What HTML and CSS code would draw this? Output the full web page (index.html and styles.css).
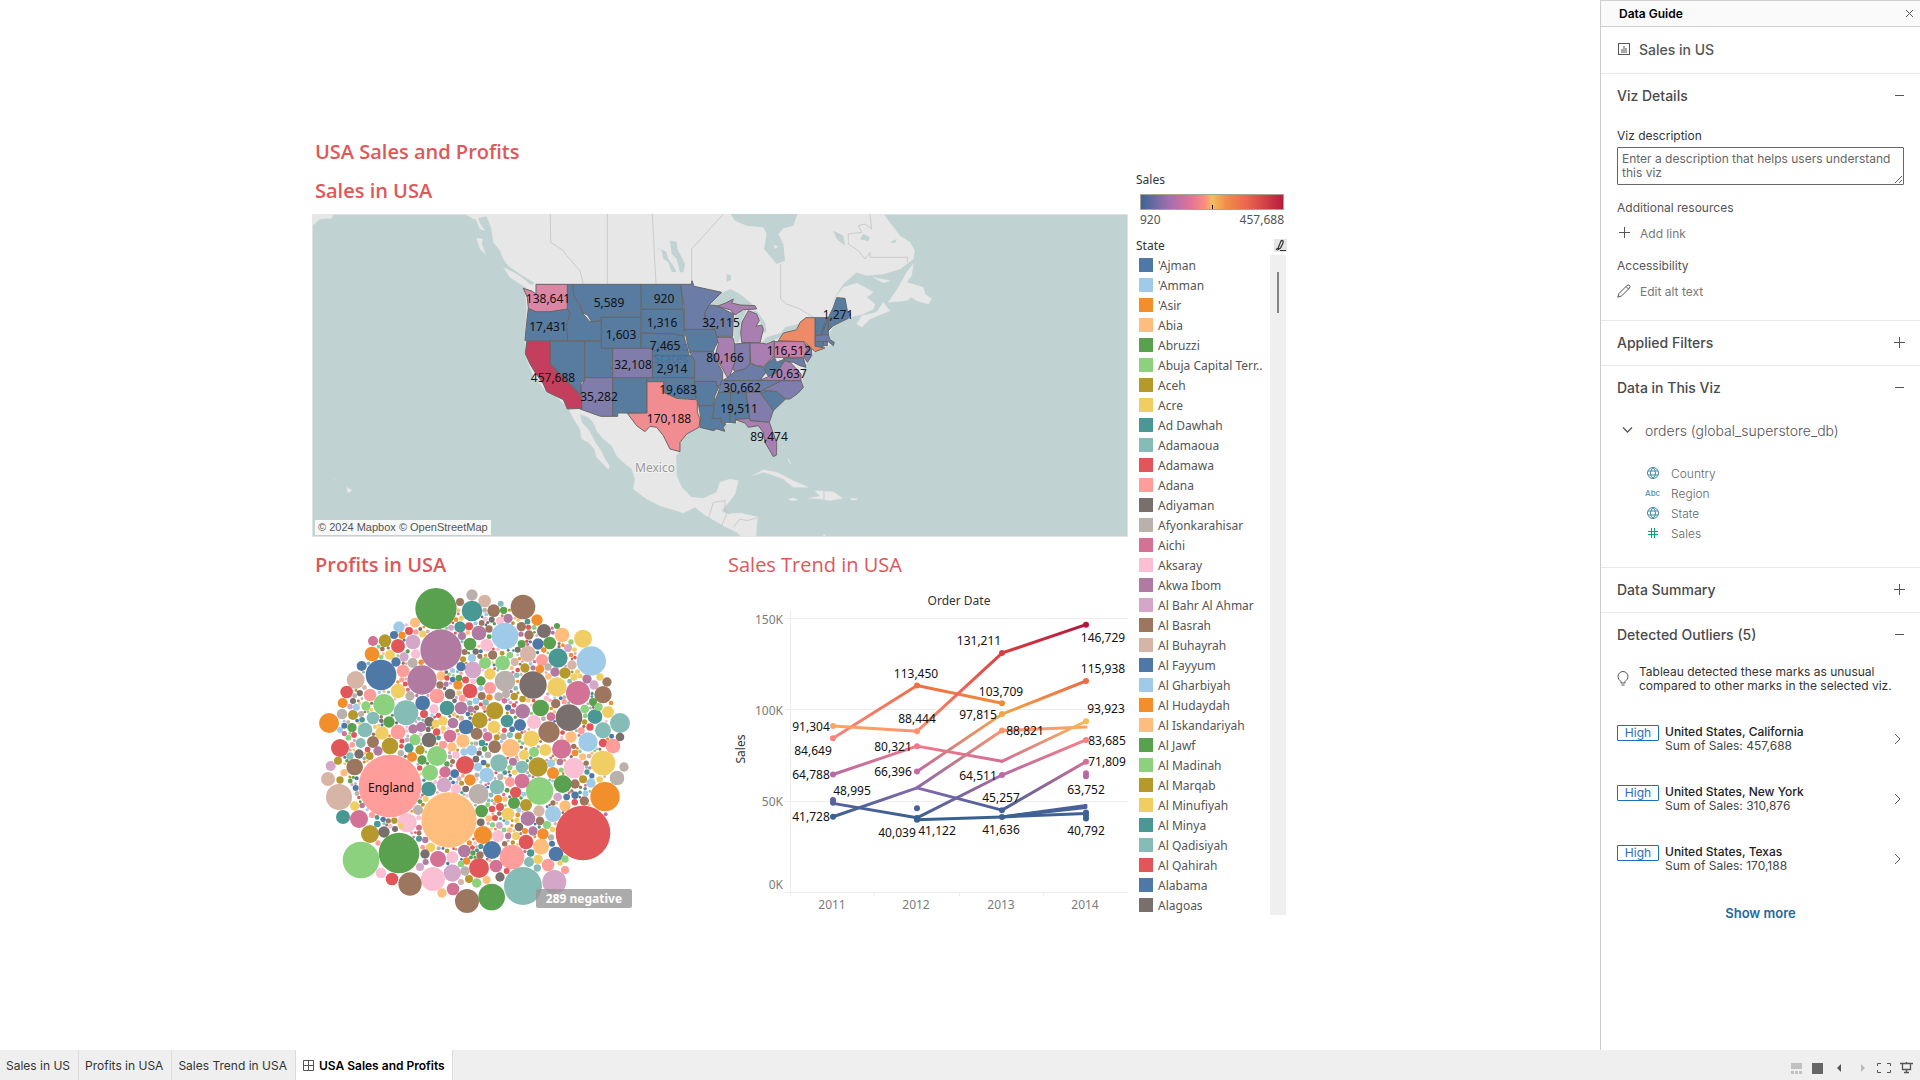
FILE: index.html
```
<!DOCTYPE html>
<html lang="en">
<head>
<meta charset="utf-8">
<title>USA Sales and Profits</title>
<link rel="stylesheet" href="styles.css">
</head>
<body>
<div class="workspace">
  <main class="canvas">
    <div class="dashboard">
      <div class="views">
        <h1 class="title">USA Sales and Profits</h1>
        <section class="view">
          <h2 class="title">Sales in USA</h2>
          <div class="map">
            <svg class="chart" viewBox="-188 5 816 323" role="img" aria-label="Map of sales by state">
              <g transform="scale(.33333)">
                <g class="land">
                  <path d="M-102 15L-80 30L-40 22L-25 60L-20 100L0 125L10 150L25 170L60 195L105 222L75 240L80 300L75 395L76 440L100 500L140 550L165 560L205 598L218 625L240 660L245 690L265 700L283 720L290 745L310 765L325 782L328 770L315 750L300 720L285 700L268 665L245 640L240 615L265 625L280 640L290 665L310 690L335 710L350 740L370 760L395 780L405 810L400 840L440 870L480 890L550 912L585 895L610 915L635 930L670 950L710 970L725 984H768L772 930L778 925L720 912L680 915L665 905L690 875L705 855L715 815L690 810L660 820L650 850L610 868L575 865L545 835L530 800L528 740L540 728L540 700L560 675L600 650L630 655L660 665L680 645L740 635L790 650L795 690L820 740L832 735L830 700L810 650L810 610L860 570L905 530L910 480L940 430L1000 405L985 380L1000 350L1050 325L1090 315L1120 300L1125 285L1100 265L1120 250L1095 235L1070 222L1030 235L990 285L1030 225L1070 190L1100 200L1150 195L1200 180L1240 150L1244 125L1230 100L1200 80L1150 15Z"/>
                  <path d="M-564 15H-500L-505 28L-540 30L-562 50ZM-100 20L-75 25L-60 60L-45 65L-62 40L-70 15ZM-70 88L-52 90L-55 105L-42 137L-60 120ZM10 175L40 190L65 205L100 235L90 242L60 225L30 205Z"/>
                  <path d="M1070 345L1085 320L1130 310L1150 280L1165 300L1170 305L1110 330L1085 355ZM1165 280L1195 235L1220 190L1240 165L1235 200L1220 220L1270 235L1275 255L1295 270L1285 285L1250 275L1235 265L1220 275ZM1120 205L1170 215L1150 222Z"/>
                  <path d="M758 800L790 782L830 790L880 815L925 835L880 835L850 810L810 795L790 790ZM865 870L880 867L894 873L875 875ZM945 845L1000 848L1028 868L990 875L968 870L925 868L960 862ZM1052 868L1072 869L1070 873H1052ZM863 745L873 765L868 762ZM-460 835L-445 843L-452 852L-458 848ZM-495 812L-500 808ZM968 984L972 976L980 984Z"/>
                </g>
                <g class="water">
                  <path d="M692 15L705 35L740 50L790 55L800 75L792 120L830 165L855 155L850 105L835 75L850 58L880 50L892 15ZM510 95L530 98L532 120L555 165L550 190L540 190L530 150L515 135ZM472 115L500 130L505 150L520 170L530 190L515 188L505 160L490 150L485 125ZM680 195L692 198L694 212L680 218ZM632 287L660 255L690 240L720 255L750 280L765 292L720 290L690 280L655 292ZM703 325L720 310L740 300L732 322L722 345L722 380L715 402L703 395ZM740 305L770 306L795 340L800 370L783 372L785 350L775 320ZM780 407L800 385L850 370L840 385L800 402ZM843 372L855 355L895 345L895 358L850 370ZM1000 65L1030 80L1035 110L1010 90ZM1080 90L1090 75L1110 85L1105 97ZM1170 100L1190 90L1185 102ZM820 108L835 112L825 120Z"/>
                </g>
                <path class="border" d="M151 15L152 100L190 125L200 140L240 185L250 225M322 15V225M457 15L468 225M670 15L575 120V215M842 165V270L860 285L900 300L940 325M1110 15L1115 60L1095 45L1075 50L1085 70L1045 75L1045 105L1075 125L1095 150L1110 130V145H1222V160M625 930L640 880L675 875V905L690 915M665 950L680 915M700 955L720 930L740 935L778 925M972 845V870"/>
                <g class="states">
                  <g class="s1">
                    <path d="M85 298L108 308L202 300L210 312L200 345L203 395H75L80 340Z"/>
                    <path d="M151 397H254V516L243 520V560L151 465Z"/>
                    <path d="M202 226H218L222 260L240 290L245 310L270 338L304 335V395H203L200 345L212 315L202 300Z"/>
                    <path d="M218 226H423V325H304V335L275 338L262 318L248 312L240 285L222 262Z"/>
                    <path d="M304 325H423V418H304Z"/>
                    <path d="M254 397H304V418H338V506H254Z"/>
                    <path d="M338 506H440V612H353V622H338Z"/>
                    <path d="M423 226H542L550 301H425Z"/>
                    <path d="M425 301H550L553 382L520 375L425 372Z"/>
                    <path d="M423 372L520 375L552 382L568 440H457V418H423Z"/>
                    <path d="M457 440H575L584 455V506H457Z"/>
                    <path d="M440 506H584L587 572L560 572L530 568L491 550V518H440Z"/>
                    <path d="M553 361H643L658 390L645 415L640 428L568 426Z"/>
                    <path d="M584 517H650L660 525L645 560L640 590H596L590 570Z"/>
                    <path d="M596 590H640L642 600L635 628H665L662 640L678 645L670 655L674 667L650 660L640 665L600 655L602 625Z"/>
                    <path d="M655 550H692L690 640H665L663 628H637L645 575Z"/>
                    <path d="M692 550H738L748 628L705 630L707 642L690 640Z"/>
                    <path d="M780 550L815 545L830 548L857 570L820 605Z"/>
                    <path d="M790 475L815 452L823 445L830 460L855 450L840 478L830 490L805 503Z"/>
                    <path d="M945 326H985L965 378H945ZM985 326V378H962L975 340ZM985 326L1000 295L1010 266L1035 268L1042 305L1052 315L1045 328L1000 350L985 365ZM945 397H970V412L945 414Z"/>
                  </g>
                  <g class="s2">
                    <path d="M542 226H574L576 215L582 232L620 240L665 250L630 285L615 310V340L645 361H553V300Z"/>
                    <path d="M615 310L628 288L650 290L700 315L698 382H650L645 360L615 340Z"/>
                    <path d="M568 428H640L650 455L668 490V515L660 530H650V517H584V455Z"/>
                    <path d="M668 515L690 500L705 487L735 480L752 463L770 470L790 475L798 490L780 514Z"/>
                    <path d="M665 515H845L785 548L655 550Z"/>
                    <path d="M945 380L985 377L990 392L1003 400L1000 410L985 398H945ZM850 447H910L918 475L900 470L880 460L858 458ZM970 397H982V410H970Z"/>
                  </g>
                  <g class="s3">
                    <path d="M254 506H338V622H302L240 600L246 570L243 530L254 516Z"/>
                    <path d="M338 418H457V506H338Z"/>
                    <path d="M704 405L750 402V465L735 480L705 487L697 480L704 460Z"/>
                    <path d="M738 550H780L820 605L808 640L750 635L748 610Z"/>
                    <path d="M785 545L845 515H903L910 535L895 552L870 570L857 570L830 548L810 545Z"/>
                    <path d="M915 405L935 420V440L922 460L912 445Z"/>
                  </g>
                  <g class="s4">
                    <path d="M650 385H698L704 405V460L690 500L682 505L668 480L645 440L655 405Z"/>
                    <path d="M650 292L675 283L700 270L695 282L720 288L765 290L770 300L730 302L705 318L690 302ZM725 400L722 370L726 340L745 305L770 315L778 335L768 352L785 348L790 360L780 402Z"/>
                    <path d="M750 402H780L800 405L823 395V440L790 472L770 470L752 462Z"/>
                    <path d="M705 632L748 628L750 635L808 640L815 660L830 700V738L820 743L808 722L795 700L790 670L775 650L745 655L735 642Z"/>
                    <path d="M780 514L805 503L830 490L855 455L870 460L885 475L903 495V515Z"/>
                  </g>
                  <path class="ca" d="M80 397H151V465L243 560L246 598L202 600L190 572L165 560L140 548L130 525L105 490L90 465L76 435Z"/>
                  <path class="tx" d="M441 518H491V550L530 568L587 572L592 575V610L600 630L597 655L560 675L540 700V728L510 720L490 680L470 655L450 652L435 668L410 650L382 613L441 612Z"/>
                  <path class="ny" d="M835 395L850 372L890 362L900 340L918 326H945V412L975 417L945 428L932 415L912 398Z"/>
                  <path class="wa" d="M70 238L95 246L108 255V226H202V300L150 308H108L85 298L82 265Z"/>
                  <path class="pa" d="M823 398H910L922 420L910 445H823Z"/>
                </g>
              </g>
              <g class="country"><text x="170" y="137">United</text><text x="171" y="149">States</text></g>
              <text class="place" x="155" y="258">Mexico</text>
              <g class="marks">
                <text x="48" y="89">138,641</text><text x="48" y="117">17,431</text><text x="109" y="93">5,589</text><text x="164" y="89">920</text>
                <text x="162" y="113">1,316</text><text x="121" y="125">1,603</text><text x="165" y="136">7,465</text><text x="172" y="159">2,914</text>
                <text x="133" y="155">32,108</text><text x="53" y="168">457,688</text><text x="99" y="187">35,282</text><text x="178" y="180">19,683</text>
                <text x="169" y="209">170,188</text><text x="221" y="113">32,115</text><text x="225" y="148">80,166</text><text x="242" y="178">30,662</text>
                <text x="239" y="199">19,511</text><text x="269" y="227">89,474</text><text x="338" y="105">1,271</text><text x="289" y="141">116,512</text><text x="288" y="164">70,637</text>
              </g>
            </svg>
            <div class="credit">© 2024 Mapbox © OpenStreetMap</div>
          </div>
        </section>
        <div class="pair">
          <section class="view">
            <h2 class="title">Profits in USA</h2>
            <div class="bubbles">
              <svg class="chart" viewBox="2 36 408 330" role="img" aria-label="Profits by state">
                <g id="bubbles" transform="scale(.33333)"></g>
                <text class="mark" x="81" y="237">England</text>
              </svg>
              <span class="negative">289 negative</span>
            </div>
          </section>
          <section class="view">
            <h2 class="title light">Sales Trend in USA</h2>
            <svg class="chart" viewBox="0 36 408 330" role="img" aria-label="Sales by order date">
              <path class="grid" d="M65 68.5H408M65 159.500H408M65 251.500H408M65 342.500H408M70.500 60V346M154.500 343V346M239.500 343V346M323.500 343V346"/>
              <g id="trend"></g>
              <text class="head" x="239" y="50">Order Date</text>
              <text class="head" transform="translate(20 199) rotate(-90)">Sales</text>
              <g class="ticks end"><text x="63" y="69">150K</text><text x="63" y="160">100K</text><text x="63" y="251">50K</text><text x="63" y="334">0K</text></g>
              <g class="ticks"><text x="112" y="354">2011</text><text x="196" y="354">2012</text><text x="281" y="354">2013</text><text x="365" y="354">2014</text></g>
              <g class="marks">
                <text x="91" y="176">91,304</text><text x="93" y="200">84,649</text><text x="91" y="224">64,788</text><text x="132" y="240">48,995</text><text x="91" y="266">41,728</text>
                <text x="196" y="123">113,450</text><text x="197" y="168">88,444</text><text x="173" y="196">80,321</text><text x="173" y="221">66,396</text><text x="177" y="282">40,039</text><text x="217" y="280">41,122</text>
                <text x="259" y="90">131,211</text><text x="281" y="141">103,709</text><text x="258" y="164">97,815</text><text x="305" y="180">88,821</text><text x="258" y="225">64,511</text><text x="281" y="247">45,257</text><text x="281" y="279">41,636</text>
                <text x="383" y="87">146,729</text><text x="383" y="118">115,938</text><text x="386" y="158">93,923</text><text x="387" y="190">83,685</text><text x="387" y="211">71,809</text><text x="366" y="239">63,752</text><text x="366" y="280">40,792</text>
              </g>
            </svg>
          </section>
        </div>
      </div>
      <aside class="legends">
        <section class="ramp">
          <h3 class="legend-title">Sales</h3>
          <div class="ramp-bar"></div>
          <div class="ramp-ends"><span>920</span><span>457,688</span></div>
        </section>
        <section class="state-legend">
          <div class="legend-head">
            <h3 class="legend-title">State</h3>
            <button class="highlight" aria-label="Highlight"><svg width="12" height="13" viewBox="0 0 12 13"><path d="M4.500 8L7 2Q8 1 9 2Q9.500 3 9 4L6.500 9L4 10.500ZM3.500 9L2 11M6 11.500H12" fill="none" stroke="#333" stroke-width="1.200"/></svg></button>
          </div>
          <div class="state-scroll"><ul class="state-list" id="states"></ul><div class="track"><div class="thumb"></div></div></div>
        </section>
      </aside>
    </div>
  </main>
  <aside class="guide">
    <header class="guide-head"><h2>Data Guide</h2><button aria-label="Close"><svg width="9" height="9" viewBox="0 0 9 9"><path d="M1 1L8 8M8 1L1 8"/></svg></button></header>
    <div class="guide-sheet"><svg width="12" height="12" viewBox="0 0 12 12"><rect x=".5" y=".5" width="11" height="11" fill="none" stroke="#555"/><path d="M3 10V6H5V3H7V5H9V10Z" fill="#aaa"/></svg><span>Sales in US</span></div>
    <section class="panel details">
      <div class="panel-head"><h3>Viz Details</h3><button aria-label="Collapse"><svg width="11" height="11" viewBox="0 0 11 11"><path d="M1 5.500H10"/></svg></button></div>
      <label for="desc" class="dark">Viz description</label>
      <textarea id="desc" placeholder="Enter a description that helps users understand this viz"></textarea>
      <h4>Additional resources</h4>
      <button class="action"><svg width="14" height="14" viewBox="0 0 14 14"><path d="M7.500 1V12M2 6.500H13"/></svg>Add link</button>
      <h4>Accessibility</h4>
      <button class="action"><svg width="14" height="14" viewBox="0 0 14 14"><path d="M.8 13.200L2 9.500L10 1.500Q11.300 .5 12.500 1.500Q13.500 2.600 12.500 4L4.500 12ZM9 2.500L11.500 5"/></svg>Edit alt text</button>
    </section>
    <section class="panel"><div class="panel-head"><h3>Applied Filters</h3><button aria-label="Expand"><svg width="11" height="11" viewBox="0 0 11 11"><path d="M5.500 0V11M0 5.500H11"/></svg></button></div></section>
    <section class="panel data">
      <div class="panel-head"><h3>Data in This Viz</h3><button aria-label="Collapse"><svg width="11" height="11" viewBox="0 0 11 11"><path d="M1 5.500H10"/></svg></button></div>
      <button class="source"><svg width="11" height="8" viewBox="0 0 11 8"><path d="M1 1.500L5.500 6L10 1.500" fill="none" stroke="#444" stroke-width="1.300"/></svg>orders (global_superstore_db)</button>
      <ul class="fields">
        <li><svg class="globe" width="16" height="12" viewBox="0 0 16 12"><path d="M8 .5A5.500 5.500 0 1 0 8 11.500A5.500 5.500 0 1 0 8 .5M8 .5Q3 6 8 11.500Q13 6 8 .5M3 4H13M3 8H13"/></svg>Country</li>
        <li><span class="abc">Abc</span>Region</li>
        <li><svg class="globe" width="16" height="12" viewBox="0 0 16 12"><path d="M8 .5A5.500 5.500 0 1 0 8 11.500A5.500 5.500 0 1 0 8 .5M8 .5Q3 6 8 11.500Q13 6 8 .5M3 4H13M3 8H13"/></svg>State</li>
        <li><svg class="hash" width="16" height="12" viewBox="0 0 16 12"><path d="M6.500 1V11M9.500 1V11M3 4.500H13M3 7.500H13"/></svg>Sales</li>
      </ul>
    </section>
    <section class="panel"><div class="panel-head"><h3>Data Summary</h3><button aria-label="Expand"><svg width="11" height="11" viewBox="0 0 11 11"><path d="M5.500 0V11M0 5.500H11"/></svg></button></div></section>
    <section class="panel outliers">
      <div class="panel-head"><h3>Detected Outliers (5)</h3><button aria-label="Collapse"><svg width="11" height="11" viewBox="0 0 11 11"><path d="M1 5.500H10"/></svg></button></div>
      <p class="tip"><svg width="12" height="16" viewBox="0 0 12 16"><path d="M4 12V10.500Q1 8.500 1 5.500A5 5 0 0 1 11 5.500Q11 8.500 8 10.500V12ZM4.500 14H7.500" fill="none" stroke="#555"/></svg><span>Tableau detected these marks as unusual compared to other marks in the selected viz.</span></p>
      <button class="outlier"><span class="high">High</span><span class="who"><b>United States, California</b><br>Sum of Sales: 457,688</span><svg width="7" height="12" viewBox="0 0 7 12"><path d="M1 1L6 6L1 11"/></svg></button>
      <button class="outlier"><span class="high">High</span><span class="who"><b>United States, New York</b><br>Sum of Sales: 310,876</span><svg width="7" height="12" viewBox="0 0 7 12"><path d="M1 1L6 6L1 11"/></svg></button>
      <button class="outlier"><span class="high">High</span><span class="who"><b>United States, Texas</b><br>Sum of Sales: 170,188</span><svg width="7" height="12" viewBox="0 0 7 12"><path d="M1 1L6 6L1 11"/></svg></button>
      <button class="more">Show more</button>
    </section>
  </aside>
</div>
<footer class="tabs">
  <nav>
    <a href="#sales">Sales in US</a><a href="#profits">Profits in USA</a><a href="#trend">Sales Trend in USA</a>
    <a href="#dashboard" class="active"><svg width="11" height="11" viewBox="0 0 11 11"><path d="M.5 .5H10.500V10.500H.5ZM5.500 .5V10.500M.5 5.500H10.500" fill="none" stroke="#555"/></svg>USA Sales and Profits</a>
  </nav>
  <div class="tools">
    <button aria-label="Filmstrip"><svg width="12" height="12" viewBox="0 0 12 12"><path d="M1 1H12V7H1ZM1 9H4V12H1ZM5 9H8V12H5ZM9 9H12V12H9Z" fill="#c1c1c1"/></svg></button>
    <button aria-label="Tabs"><svg width="12" height="12" viewBox="0 0 12 12"><path d="M0 1H11V12H0Z" fill="#666"/></svg></button>
    <button aria-label="Previous"><svg width="12" height="12" viewBox="0 0 12 12"><path d="M7 2V10L3 6Z" fill="#555"/></svg></button>
    <button aria-label="Next"><svg width="12" height="12" viewBox="0 0 12 12"><path d="M5 2V10L9 6Z" fill="#bbb"/></svg></button>
    <button aria-label="Full screen"><svg width="14" height="12" viewBox="0 0 14 12"><path d="M.5 4V1.500H4M10 1.500H13.500V4M13.500 8V10.500H10M4 10.500H.5V8" fill="none" stroke="#555"/></svg></button>
    <button aria-label="Present"><svg width="13" height="12" viewBox="0 0 13 12"><path d="M0 1.500H13M2.500 2V7.500H10.500V2M6.500 7.500V11M4 10.500H9M6.500 0V2" fill="none" stroke="#555" stroke-width="1.300"/></svg></button>
  </div>
</footer>
<script src="script.js"></script>
</body>
</html>
```
FILE: styles.css
```
* { box-sizing: border-box; }
body { margin: 0; min-height: 100vh; display: flex; flex-direction: column; font-family: "Inter", sans-serif; font-size: 12px; color: #333; background: #fff; }
h1, h2, h3, h4, p, ul { margin: 0; padding: 0; list-style: none; }
button { border: 0; padding: 0; background: none; font: inherit; color: inherit; display: flex; align-items: center; }
svg { flex: none; }
.workspace { flex: 1; display: flex; }
.canvas { flex: 1; display: flex; align-items: center; justify-content: center; font-family: "Noto Sans", sans-serif; }
.dashboard { width: 976px; max-width: 100%; display: flex; gap: 8px; padding-top: 2px; }
.views { flex: 1; min-width: 0; display: flex; flex-direction: column; gap: 7px; }
.title { color: #e15759; font-family: "Open Sans", sans-serif; font-size: 20px; line-height: 32px; font-weight: 600; padding-left: 3px; }
.title.light { font-weight: 400; padding-left: 8px; }
.chart { display: block; width: 100%; height: auto; }
.view { min-width: 0; }
.map { margin-top: 7px; position: relative; background: #c0d2d2; box-shadow: inset 0 0 0 1px #e0e3e3; }
.credit { position: absolute; left: 3px; bottom: 2px; height: 15px; padding: 0 3px; background: #f7f9f9; font: 11px/15px "Liberation Sans", sans-serif; color: #555; }
.pair { display: grid; grid-template-columns: 1fr 1fr; padding-top: 5px; }
.pair .title { margin-bottom: 5px; }
.land { fill: #e7e7e7; stroke: #e7e7e7; }
.water { fill: #c0d2d2; }
.border { fill: none; stroke: #bdbdbd; stroke-width: 2; }
.states { stroke: #666; stroke-width: 3; stroke-linejoin: round; }
.s1 { fill: #587ba0; }
.s2 { fill: #6b7ca7; }
.s3 { fill: #807cab; }
.s4 { fill: #a97fb1; }
.ca { fill: #c43f5e; }
.tx { fill: #f18c91; }
.ny { fill: #ee8a66; }
.wa { fill: #db86a5; }
.pa { fill: #cd7fac; }
.chart text { font-size: 12px; text-anchor: middle; dominant-baseline: central; fill: #666; }
.chart .marks text, .chart .mark { fill: #111; }
.chart .country text { fill: #43678f; fill-opacity: .6; }
.chart .place { fill: #999; stroke: #f2f2f2; stroke-width: 2px; paint-order: stroke; }
.chart .head { fill: #333; }
.chart .ticks text { fill: #7b7b7b; }
.chart .end text { text-anchor: end; }
.grid { stroke: #ededed; fill: none; }
.bubbles { position: relative; }
.negative { position: absolute; left: 224px; top: 303px; width: 96px; background: rgba(150, 150, 150, .8); border-radius: 2px; color: #fff; font-weight: 700; font-size: 12px; line-height: 19px; text-align: center; }
.legends { width: 152px; padding-top: 34px; }
.legend-title { font-size: 12px; font-weight: 400; line-height: 20px; color: #333; }
.ramp-bar { margin: 4px 4px 0; height: 16px; border: 1px solid #a9a393; background: linear-gradient(#111, #111) 50% 100% / 1px 4px no-repeat, linear-gradient(90deg, #3b6596, #a56fb0 20%, #e07396 35%, #ff8d7f 45%, #f6bd5e 50%, #f08e47 60%, #ea644e 75%, #b71d3e); }
.ramp-ends { display: flex; justify-content: space-between; padding: 0 4px; line-height: 20px; color: #555; }
.legend-head { display: flex; justify-content: space-between; align-items: center; padding: 6px 1px 0 0; height: 25px; }
.highlight { width: 13px; height: 13px; background: #e6e6e6; }
.state-scroll { display: flex; }
.state-list { flex: 1; min-width: 0; }
.state-list li { display: flex; align-items: center; gap: 5px; padding-left: 3px; height: 20px; color: #555; white-space: nowrap; }
.swatch { width: 14px; height: 14px; flex: none; }
.track { width: 16px; background: #efefef; margin-right: 2px; padding: 17px 7px; }
.thumb { width: 2px; height: 41px; background: #858585; }
.guide { width: 320px; border-left: 1px solid #ccc; }
.guide-head { display: flex; align-items: center; justify-content: space-between; height: 27px; padding: 0 6px 0 18px; background: #fafafa; border: 1px solid #d0d0d0; border-width: 1px 0; color: #000; }
.guide-head h2 { font-size: 12px; font-weight: 600; }
.guide button svg path { fill: none; stroke: #555; }
.guide-sheet { display: flex; align-items: center; gap: 9px; height: 46px; padding: 0 0 2px 17px; font-size: 14px; font-weight: 500; color: #555; }
.panel { border-top: 1px solid #e8e8e8; padding: 0 16px; }
.panel-head { display: flex; justify-content: space-between; align-items: center; height: 44px; padding-bottom: 2px; }
.panel-head button { margin-right: -1px; }
.panel-head h3 { font-size: 14px; font-weight: 500; color: #4a4a4a; }
.details { padding-bottom: 20px; display: flex; flex-direction: column; }
.details label { margin-top: 10px; line-height: 16px; }
.details h4 { font-weight: 400; font-size: 12px; line-height: 16px; color: #555; margin-top: 15px; }
.details textarea { margin-top: 3px; height: 38px; padding: 4px; border: 1px solid #666; border-radius: 1px; font: 12px/14px "Inter", sans-serif; overflow: hidden; }
.details textarea::placeholder { color: #666; }
.action { gap: 9px; margin-top: 8px; height: 18px; color: #777; }
.action + h4 { margin-top: 16px; }
.data { padding-bottom: 24px; }
.source { margin-top: 9px; padding-left: 5px; gap: 12px; height: 22px; font-size: 14px; font-weight: 300; color: #555; }
.fields { padding: 22px 0 0 28px; }
.fields li { display: flex; align-items: center; gap: 10px; height: 20px; color: #666; font-weight: 300; }
.fields path { fill: none; stroke: #3f89a5; }
.fields .hash path { stroke: #00a578; }
.abc { width: 16px; font-size: 8px; font-weight: 500; color: #4996b2; }
.tip { display: flex; align-items: center; gap: 10px; margin: 8px 0 16px; color: #333; line-height: 14px; }
.outlier { width: 100%; height: 60px; padding: 16px 3px 0 0; align-items: flex-start; text-align: left; line-height: 14px; gap: 6px; color: #444; }
.outlier b { font-weight: 500; color: #222; }
.outlier svg { margin-top: 8px; }
.high { width: 42px; height: 16px; border: 1px solid #1d6fc4; color: #2a6ebb; text-align: center; border-radius: 1px; }
.who { flex: 1; }
.more { margin: 16px auto 0; font-size: 13px; font-weight: 600; color: #1f69a0; }
.tabs { height: 30px; background: #efefef; display: flex; justify-content: space-between; }
.tabs nav { display: flex; }
.tabs a { display: flex; align-items: center; gap: 5px; padding: 0 8px 0 6px; border-right: 1px solid #dcdcdc; color: #333; text-decoration: none; }
.tabs .active { background: #fff; color: #000; font-weight: 600; padding: 0 7px; }
.tools { display: flex; gap: 8px; padding: 5px 7px 0 0; align-items: center; }
.tools button { width: 14px; justify-content: center; }
```
FILE: script.js
```
const NS = 'http://www.w3.org/2000/svg';
const palette = ['#4e79a7', '#a0cbe8', '#f28e2b', '#ffbe7d', '#59a14f', '#8cd17d', '#b6992d', '#f1ce63', '#499894', '#86bcb6', '#e15759', '#ff9d9a', '#79706e', '#bab0ac', '#d37295', '#fabfd2', '#b07aa1', '#d4a6c8', '#9d7660', '#d7b5a6'];

function add(parent, name, attrs) {
  const el = document.createElementNS(NS, name);
  for (const key in attrs) el.setAttribute(key, attrs[key]);
  parent.appendChild(el);
  return el;
}

/* State legend */
const states = "'Ajman,'Amman,'Asir,Abia,Abruzzi,Abuja Capital Terr..,Aceh,Acre,Ad Dawhah,Adamaoua,Adamawa,Adana,Adiyaman,Afyonkarahisar,Aichi,Aksaray,Akwa Ibom,Al Bahr Al Ahmar,Al Basrah,Al Buhayrah,Al Fayyum,Al Gharbiyah,Al Hudaydah,Al Iskandariyah,Al Jawf,Al Madinah,Al Marqab,Al Minufiyah,Al Minya,Al Qadisiyah,Al Qahirah,Alabama,Alagoas".split(',');
const stateColors = [...Array(31).keys()].map(i => i % 20).concat([0, 12]);
states.forEach((name, i) => {
  const li = document.createElement('li');
  const swatch = document.createElement('span');
  swatch.className = 'swatch';
  swatch.style.background = palette[stateColors[i]];
  li.append(swatch, name);
  document.getElementById('states').append(li);
});

/* Packed bubbles: x, y, radius, palette letter (a = first colour) */
const packed = `378,176,62,e 486,135,17,n 450,156,12,s 524,153,19,t 486,183,31,i 551,182,19,s 572,161,9,j 581,181,11,e 639,171,37,s 594,205,14,q 681,210,17,c 570,212,12,p
393,300,62,q 450,231,17,i 477,229,12,k 507,249,22,q 537,237,11,s 585,258,40,b 438,209,7,c 456,258,12,q 267,231,17,b 315,218,15,d 297,243,12,k 318,246,8,l 331,237,6,m
189,273,15,o 225,272,19,g 252,255,12,a 276,256,11,c 264,288,21,k 309,276,22,r 317,312,14,p 186,312,22,c 155,348,15,a 213,375,46,a 240,315,15,h 258,336,14,a 282,321,14,r 308,339,15,n
279,363,19,l 336,390,44,q 137,390,27,t 110,426,19,k 98,459,15,c 129,453,9,m 180,435,19,l 222,464,32,f 264,423,22,h 300,438,14,n 288,488,37,j 338,459,22,a 381,438,22,l 342,492,12,k
372,477,14,p 393,378,14,d 390,405,11,s 420,432,16,m 444,405,14,c 480,423,22,k 489,360,25,r 453,350,14,a 513,393,14,e 515,438,12,s 486,324,12,b 480,282,19,e 530,285,19,p 525,339,18,f
548,315,14,s 578,339,22,f 540,372,17,h 540,414,18,l 585,393,31,n 411,474,22,i 453,474,19,q 399,513,14,h 429,519,16,q 358,515,15,m 468,531,22,a 509,511,24,g 554,482,26,g 552,531,19,h
591,513,19,i 630,525,18,a 638,484,22,q 669,405,41,m 692,474,25,e 741,411,29,h 804,429,36,o 879,434,26,s 891,396,14,s 852,405,14,r 870,381,11,h 831,387,14,q 844,333,44,b 819,266,27,h
756,255,22,d 741,228,9,e 702,243,21,m 719,279,19,e 684,282,17,a 657,255,14,s 634,230,14,s 635,282,12,e 654,312,24,t 744,324,29,i 696,330,18,l 690,357,13,c 714,351,11,n 735,366,14,q
765,369,17,g 786,345,14,t 774,294,12,r 783,315,7,c 783,276,8,f 645,354,14,g 614,336,12,t 623,299,9,m 792,381,11,h 777,503,40,m 737,461,14,s 717,546,32,s 723,500,13,o 672,516,21,p
664,566,24,h 855,500,22,i 894,486,18,h 903,459,7,c 930,519,30,j 879,541,24,j 840,531,11,k 824,477,13,f 849,456,12,e 866,471,12,f 824,516,8,g 834,576,29,b 783,561,17,d 755,597,29,o
706,600,18,h 672,606,15,f 795,609,10,c 792,654,31,p 879,639,37,h 879,579,13,k 909,588,22,l 930,561,13,m 942,651,14,n 921,684,22,n 885,740,44,c 823,753,14,s 843,699,14,b 831,666,8,i
795,702,14,s 758,702,27,e 729,669,18,c 689,723,41,f 684,651,29,g 636,651,19,j 636,693,22,o 609,635,12,q 567,639,26,j 602,594,27,d 642,615,15,h 554,590,19,s 533,560,14,o 500,551,18,s
459,573,20,d 420,558,19,o 380,546,11,k 377,521,12,h 357,570,22,m 315,569,17,f 330,600,14,g 306,621,15,c 336,630,14,e 381,618,30,f 297,594,14,i 240,588,25,g 264,546,22,l 237,516,17,e
216,549,20,h 189,576,18,s 189,504,19,j 165,540,22,j 152,579,15,j 129,495,15,g 126,533,14,e 96,492,16,n 57,519,30,c 90,540,9,b 90,594,27,k 147,612,14,m 120,618,11,j 179,618,12,g
204,603,14,q 84,632,12,g 62,648,15,r 102,668,11,d 134,651,25,s 54,687,21,t 90,690,11,g 87,741,39,t 134,768,14,h 99,801,21,i 147,807,27,o 240,708,94,l 137,714,9,a 168,468,14,f
153,492,9,n 309,537,14,q 333,531,15,q 329,654,8,k 360,668,24,f 405,666,17,o 465,645,27,k 411,642,8,e 434,671,13,a 402,705,22,r 356,717,22,i 438,717,15,p 347,747,9,h 467,717,10,m
480,690,17,c 506,732,30,n 530,675,22,b 504,651,13,b 561,711,22,j 600,696,15,l 617,727,17,k 564,747,12,c 417,810,83,d 515,783,19,e 324,780,15,n 291,818,29,p 519,855,27,c 546,777,10,k
570,771,12,k 612,759,18,e 648,765,18,g 594,792,19,h 555,804,9,k 627,831,13,m 654,806,22,q 687,783,17,t 690,813,13,s 729,792,24,b 711,825,12,f 765,768,17,d 743,741,13,r 770,741,10,a
729,759,8,s 699,852,17,c 669,843,14,q 648,876,22,k 618,858,12,h 645,843,9,c 564,858,18,p 693,890,24,d 738,912,22,a 726,881,9,a 819,849,82,k 887,793,6,q 606,921,37,l 546,900,27,a
507,954,30,k 558,948,19,o 570,981,14,m 590,963,9,k 463,903,19,q 427,922,18,p 453,942,10,f 465,963,14,n 470,933,11,c 510,915,11,s 489,909,8,e 384,927,24,o 362,892,14,h 345,912,14,m
347,936,9,q 330,951,12,r 427,969,26,r 369,987,36,p 396,1029,14,d 429,1017,19,o 453,996,9,t 477,987,12,g 500,999,14,f 530,990,12,d 471,1053,36,s 545,1041,40,e 639,1008,57,j 657,936,15,j
662,909,11,i 684,928,14,h 714,945,19,l 682,954,11,j 733,996,36,r 765,960,12,l 765,927,11,f 750,939,8,h 267,909,61,e 153,930,55,f 180,852,27,g 222,846,17,m 204,879,8,l 213,969,16,p
246,987,19,k 300,1002,35,s 202,822,10,i 186,795,9,l 255,837,9,m 273,828,8,h 327,833,9,o 327,866,9,i 426,591,14,d 438,615,11,p 462,606,11,b 485,601,16,b 516,579,10,i 534,615,10,n
580,560,10,n 600,555,9,j 399,584,12,l 723,640,12,b 750,636,10,q 411,384,8,k 447,384,10,e 588,432,12,n 566,440,13,n 498,453,10,b 623,360,7,k`;
const circles = packed.split(/\s+/).map(entry => {
  const [x, y, r, c] = entry.split(',');
  return [+x, +y, +r, c.charCodeAt(0) - 97];
});

/* The smallest states fill the gaps between the larger ones */
let seed = 7;
const random = () => (seed = (seed * 16807) % 2147483647) / 2147483647;
for (let i = 0; i < 60000; i++) {
  const x = 60 + random() * 880;
  const y = 120 + random() * 870;
  if (Math.hypot(x - 500, (y - 560) * 1.03) > 405) continue;
  const limit = i < 20000 ? 7 : 4;
  let r = limit + random() * 5;
  for (const c of circles) {
    r = Math.min(r, Math.hypot(x - c[0], y - c[1]) - c[2]);
    if (r < limit) break;
  }
  if (r >= limit) circles.push([x, y, r, Math.floor(random() * 20)]);
}
for (const [x, y, r, c] of circles) {
  add(document.getElementById('bubbles'), 'circle', { cx: x.toFixed(1), cy: y.toFixed(1), r: r.toFixed(1), fill: palette[c] });
}

/* Sales trend: each line is coloured by its value */
const ramp = [[40, 54, 97, 143], [48, 78, 96, 155], [58, 140, 103, 172], [66, 193, 107, 161], [75, 222, 112, 145], [84, 248, 128, 130], [89, 255, 149, 106], [94, 246, 187, 88], [98, 243, 163, 70], [104, 241, 137, 61], [114, 236, 112, 70], [131, 216, 64, 67], [147, 183, 18, 58]];
function color(v) {
  let i = 1;
  while (i < ramp.length - 1 && ramp[i][0] < v) i++;
  const [a, b] = [ramp[i - 1], ramp[i]];
  const t = Math.max(0, Math.min(1, (v - a[0]) / (b[0] - a[0])));
  return `rgb(${[1, 2, 3].map(k => Math.round(a[k] + (b[k] - a[k]) * t))})`;
}
const years = [113, 197, 282, 366];
const yOf = v => 343 - v * 1.829;
const trend = document.getElementById('trend');
const series = [[0, 41.7, 57.5, 88.8, 90.7], [0, 64.8, 80.3, 72, 93.9], [1, 66.4, 97.8, 115.9], [0, 84.6, 113.5, 103.7], [0, 91.3, 88.4, 131.2, 146.7], [0, 49, 41.1, 64.5, 83.7], [1, 57.5, 45.3, 71.8], [2, 41.6, 47.8], [2, 41.6, 46.8], [1, 40, 41.6, 43.5]];
series.forEach(([start, ...values], s) => {
  for (let i = 1; i < values.length; i++) {
    const [x1, x2] = [years[start + i - 1], years[start + i]];
    const [y1, y2] = [yOf(values[i - 1]), yOf(values[i])];
    const id = `seg${s}-${i}`;
    const gradient = add(trend, 'linearGradient', { id, gradientUnits: 'userSpaceOnUse', x1, y1, x2, y2 });
    add(gradient, 'stop', { offset: 0, 'stop-color': color(values[i - 1]) });
    add(gradient, 'stop', { offset: 1, 'stop-color': color(values[i]) });
    add(trend, 'line', { x1, y1, x2, y2, stroke: `url(#${id})`, 'stroke-width': 3, 'stroke-linecap': 'round' });
  }
});
const dots = [[0, 91.3], [0, 84.6], [0, 64.8], [0, 50.8], [0, 49.3], [0, 41.7], [1, 113.5], [1, 88.4], [1, 80.3], [1, 66.4], [1, 46.3], [1, 41], [1, 40], [2, 131.2], [2, 103.7], [2, 97.8], [2, 88.8], [2, 64.5], [2, 45.3], [2, 41.6], [3, 146.7], [3, 115.9], [3, 93.9], [3, 83.7], [3, 71.8], [3, 65.5], [3, 63.8], [3, 44], [3, 42.5], [3, 40.8]];
for (const [year, v] of dots) add(trend, 'circle', { cx: years[year], cy: yOf(v), r: 3, fill: color(v) });
```
